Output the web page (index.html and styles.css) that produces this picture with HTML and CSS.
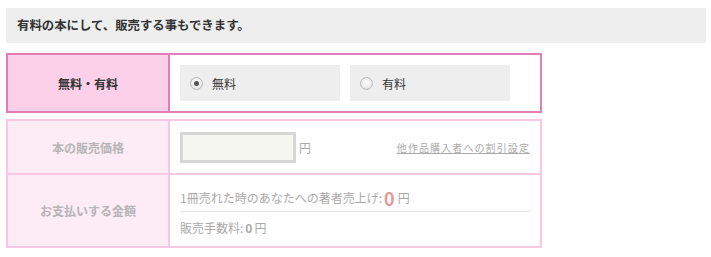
FILE: index.html
```html
<!DOCTYPE html>
<html lang="ja">
<head>
<meta charset="utf-8">
<link rel="stylesheet" href="styles.css">
</head>
<body>
<div class="wrap">
  <div class="header">有料の本にして、販売する事もできます。</div>

  <div class="tbl tbl-active">
    <div class="row">
      <div class="label">無料・有料</div>
      <div class="cell options">
        <div class="opt"><span class="radio checked"></span><span>無料</span></div>
        <div class="opt"><span class="radio"></span><span>有料</span></div>
      </div>
    </div>
  </div>

  <div class="tbl tbl-disabled">
    <div class="row row-price">
      <div class="label">本の販売価格</div>
      <div class="cell price">
        <span class="input"></span><span class="yen">円</span>
        <span class="link">他作品購入者への割引設定</span>
      </div>
    </div>
    <div class="row row-pay">
      <div class="label">お支払いする金額</div>
      <div class="cell pay">
        <div class="line1">1冊売れた時のあなたへの著者売上げ:<span class="big">0</span><span class="yen2">円</span></div>
        <div class="line2">販売手数料:<b>0</b>円</div>
      </div>
    </div>
  </div>
</div>
</body>
</html>
```

FILE: styles.css
```css
html, body {
  margin: 0;
  padding: 0;
  background: #fff;
}
body {
  font-family: "Noto Sans CJK JP", "DejaVu Sans", sans-serif;
  font-size: 12px;
  color: #333;
}
.wrap {
  padding: 8px 5px 0 6px;
}
.header {
  background: #eeeeee;
  height: 35px;
  line-height: 35px;
  padding-left: 11px;
  font-weight: bold;
  font-size: 12.4px;
  color: #333;
}
.tbl {
  width: 532px;
  margin-top: 10px;
}
.tbl-active {
  border: 2px solid #e47db6;
}
.tbl-disabled {
  margin-top: 6px;
  border: 2px solid #f8c8e2;
}
.row {
  display: flex;
}
.label {
  width: 160px;
  flex: none;
  display: flex;
  align-items: center;
  justify-content: center;
  font-weight: bold;
}
.tbl-active .label {
  background: #fdd0ea;
  border-right: 2px solid #e47db6;
  color: #333;
}
.tbl-disabled .label {
  background: #fdebf5;
  border-right: 2px solid #f8c8e2;
  color: #b5b5b5;
}
.tbl-disabled .row + .row {
  border-top: 2px solid #f8c8e2;
}
.cell {
  flex: 1;
}
.options {
  display: flex;
  gap: 10px;
  padding: 10px;
}
.opt {
  width: 160px;
  height: 36px;
  background: #eeeeee;
  display: flex;
  align-items: center;
  padding-left: 10px;
  box-sizing: border-box;
  color: #333;
}
.radio {
  width: 11px;
  height: 11px;
  border-radius: 50%;
  border: 1px solid #b9b9b9;
  background: radial-gradient(circle at 50% 40%, #ffffff 0%, #e6e6e6 70%, #d6d6d6 100%);
  margin-right: 9px;
  position: relative;
  flex: none;
}
.radio.checked::after {
  content: "";
  position: absolute;
  left: 3px;
  top: 3px;
  width: 5px;
  height: 5px;
  border-radius: 50%;
  background: #555;
}
.row-price {
  height: 52px;
}
.price {
  display: flex;
  align-items: center;
  padding: 0 10px;
  color: #aaa;
}
.input {
  width: 110px;
  height: 25px;
  border: 3px solid #d6d6d6;
  background: #f6f6f1;
  margin-top: 1px;
}
.yen {
  margin-left: 3px;
  font-size: 12px;
}
.link {
  margin-left: auto;
  font-size: 10px;
  letter-spacing: 1.1px;
  text-decoration: underline;
  color: #aaa;
}
.row-pay {
  height: 71px;
}
.pay {
  padding: 10px 10px 0 10px;
  color: #aaa;
}
.line1 {
  height: 25px;
  display: flex;
  align-items: center;
  border-bottom: 1px solid #e6e6e6;
  padding-bottom: 1px;
}
.big {
  font-size: 18px;
  font-weight: bold;
  color: #e9969a;
  margin: 0 3px 0 2px;
  line-height: 1;
}
.yen2 {
  font-size: 12px;
}
.line2 {
  padding-top: 7px;
  font-size: 12px;
}
.line2 b {
  margin: 0 2px;
}
```
